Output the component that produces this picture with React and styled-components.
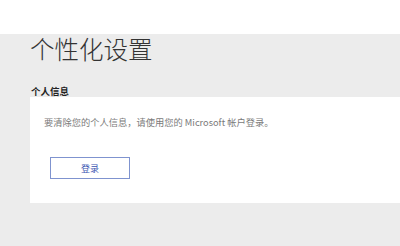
import React from 'react';
import styled, { createGlobalStyle } from 'styled-components';

const GlobalStyle = createGlobalStyle`
  html, body {
    margin: 0;
    padding: 0;
    background: #ececec;
  }
  body {
    font-family: "Noto Sans CJK SC", "Noto Sans", sans-serif;
  }
`;

const Page = styled.div`
  width: 400px;
  height: 246px;
  display: flex;
  flex-direction: column;
  overflow: hidden;
`;

const TopBar = styled.div`
  height: 34px;
  background: #ffffff;
  flex-shrink: 0;
`;

const Content = styled.div`
  flex: 1;
  background: #ececec;
  padding-left: 30px;
  display: flex;
  flex-direction: column;
`;

const Title = styled.h1`
  margin: 0;
  font-size: 24.5px;
  line-height: 30px;
  font-weight: 300;
  color: #333333;
`;

const SectionLabel = styled.h2`
  margin: 22px 0 0 1px;
  font-size: 9.5px;
  line-height: 11px;
  font-weight: 700;
  color: #222222;
`;

const Card = styled.div`
  background: #ffffff;
  padding: 19px 14px 24px 14px;
  display: flex;
  flex-direction: column;
  align-items: flex-start;
`;

const Message = styled.p`
  margin: 0;
  font-size: 9.25px;
  line-height: 13px;
  color: #7a7a7a;
`;

const SignInButton = styled.button`
  margin: 28px 0 0 6px;
  width: 80px;
  height: 22px;
  padding: 0;
  background: #ffffff;
  border: 1px solid #7f93cf;
  color: #3a55b2;
  font-family: "Noto Sans CJK SC", "Noto Sans", sans-serif;
  font-size: 9px;
  cursor: pointer;
`;

export default function App() {
  return (
    <>
      <GlobalStyle />
      <Page>
        <TopBar />
        <Content>
          <Title>个性化设置</Title>
          <SectionLabel>个人信息</SectionLabel>
          <Card>
            <Message>要清除您的个人信息，请使用您的 Microsoft 帐户登录。</Message>
            <SignInButton>登录</SignInButton>
          </Card>
        </Content>
      </Page>
    </>
  );
}
